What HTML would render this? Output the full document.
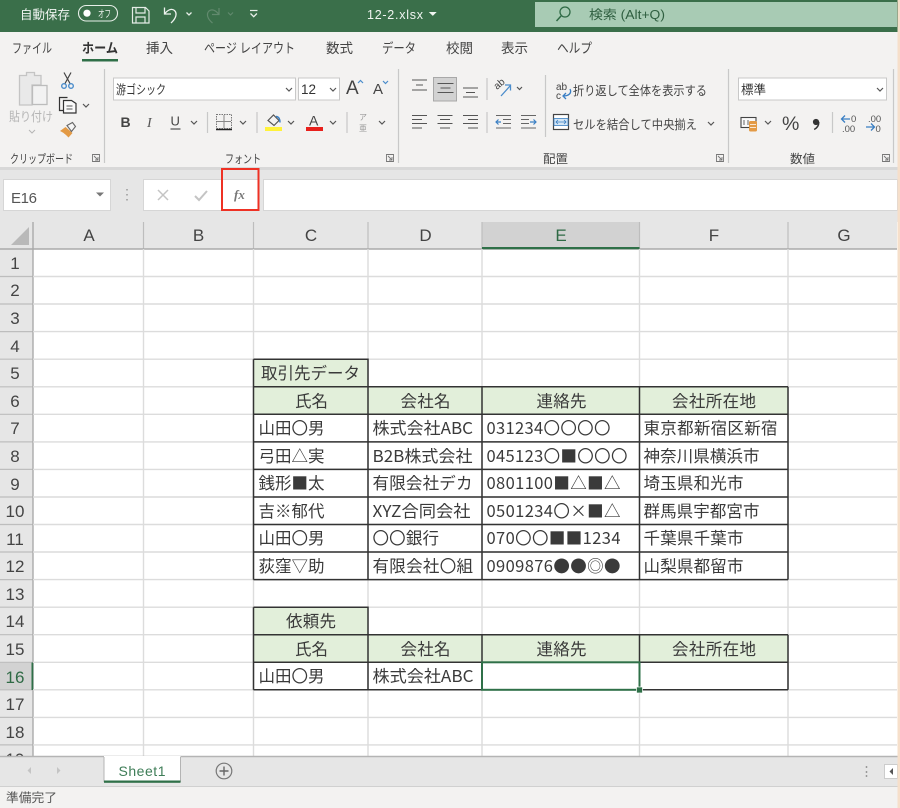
<!DOCTYPE html>
<html lang="ja"><head><meta charset="utf-8"><title>12-2.xlsx</title>
<style>
html,body{margin:0;padding:0;background:#fff;width:900px;height:808px;overflow:hidden}
svg{display:block;filter:blur(.3px)}
text{font-family:"Liberation Sans","Noto Sans CJK JP",sans-serif}
.c{font-size:16.5px;fill:#3a3a3a;font-family:"Noto Sans CJK JP","Liberation Sans",sans-serif}
.h{font-size:17px;fill:#444;text-anchor:middle}
.r{font-size:12.5px;fill:#444}
.t{font-size:13.5px;fill:#444}
.ch{fill:none;stroke:#555;stroke-width:1.2}
.g{stroke:#dcdcdc;stroke-width:1.4}
.b{stroke:#333;stroke-width:1.5;fill:none}
</style></head><body>
<svg width="900" height="808" viewBox="0 0 900 808" xmlns="http://www.w3.org/2000/svg">
<rect width="900" height="808" fill="#fff"/>
<!-- title bar -->
<rect width="900" height="32" fill="#3a6f4a"/>
<rect y="32" width="900" height="136" fill="#f3f2f1"/>
<rect x="535" y="2" width="362" height="25" fill="#a8cbb4"/>
<text x="20" y="19" font-size="12.5" fill="#f0f5f1" textLength="50" lengthAdjust="spacingAndGlyphs">自動保存</text>
<rect x="78.5" y="5.5" width="39" height="15.5" rx="7.7" fill="none" stroke="#e8efe9" stroke-width="1.1"/>
<circle cx="87" cy="13.2" r="3.6" fill="#fff"/>
<text x="98" y="17.5" font-size="10" fill="#f0f5f1" textLength="13" lengthAdjust="spacingAndGlyphs">オフ</text>
<path d="M132.5 7.5h13l3.500 3.500v12h-16.500zM136 7.500v5.500h9v-5.500M136 23v-6h9v6" fill="none" stroke="#e4ece6" stroke-width="1.200"/>
<path d="M164.500 7.500v6.500h6.500M164.500 14c3-4 7-6 10-3.500 3 3 1.500 8-3.500 12.500" fill="none" stroke="#eef3ef" stroke-width="1.300"/>
<path d="M186.500 12.500l2.500 2.500 2.500-2.500" fill="none" stroke="#e8efe9" stroke-width="1.300"/>
<path d="M219 8v6.500h-7M219 14.500c-3-4-7-6-10-3.500-3 3-1.500 8 3.500 12" fill="none" stroke="#628a6e" stroke-width="1.200"/>
<path d="M228 12.500l2.500 2.500 2.500-2.500" fill="none" stroke="#628a6e" stroke-width="1.100"/>
<path d="M250 10.500h7.500" stroke="#e8efe9" stroke-width="1.200"/><path d="M250.500 13.500l3.200 3.200 3.200-3.200" fill="none" stroke="#e8efe9" stroke-width="1.300"/>
<text x="367" y="19" font-size="12.500" fill="#f0f5f1" textLength="56" lengthAdjust="spacing">12-2.xlsx</text>
<path d="M430 12.500h5.500l-2.700 2.700z" fill="#f0f5f1" stroke="#f0f5f1"/>
<circle cx="565" cy="12" r="5" fill="none" stroke="#2f6a45" stroke-width="1.300"/><path d="M561 16l-4.500 5" stroke="#2f6a45" stroke-width="1.500"/>
<text x="589" y="19" font-size="12.500" fill="#2f5f40" textLength="76" lengthAdjust="spacingAndGlyphs">検索 (Alt+Q)</text>
<!-- tabs -->
<text class="t" x="12" y="53" textLength="40" lengthAdjust="spacingAndGlyphs">ファイル</text>
<text class="t" x="82" y="53" textLength="36" lengthAdjust="spacingAndGlyphs" font-weight="700" style="fill:#333">ホーム</text>
<rect x="82" y="59" width="36" height="2.500" fill="#2f6f48"/>
<text class="t" x="146" y="53" textLength="27" lengthAdjust="spacingAndGlyphs">挿入</text>
<text class="t" x="204" y="53" textLength="91" lengthAdjust="spacingAndGlyphs">ページ レイアウト</text>
<text class="t" x="326" y="53" textLength="27" lengthAdjust="spacingAndGlyphs">数式</text>
<text class="t" x="382" y="53" textLength="34" lengthAdjust="spacingAndGlyphs">データ</text>
<text class="t" x="446" y="53" textLength="27" lengthAdjust="spacingAndGlyphs">校閲</text>
<text class="t" x="501" y="53" textLength="27" lengthAdjust="spacingAndGlyphs">表示</text>
<text class="t" x="557" y="53" textLength="35" lengthAdjust="spacingAndGlyphs">ヘルプ</text>
<!-- ribbon separators -->
<g stroke="#c8c8c8" stroke-width="1.200">
<path d="M104.500 69v94M398.500 69v94M728.500 69v94M893.500 69v94M545.500 75v62"/>
<path d="M207.500 112v21M257 112v21M347 112v21M487 78v22M487 112v21M832.500 112v21"/>
</g>
<!-- clipboard -->
<path d="M19.500 75.500h7v-3h8v3h6.500v9.500h-9v20h-12.500z" fill="#e9e9e9" stroke="#c4c4c4" stroke-width="1.300"/>
<rect x="32.500" y="85.500" width="14.500" height="19" fill="#f2f2f2" stroke="#bcbcbc" stroke-width="1.300"/>
<text class="r" x="9" y="121" style="fill:#b5b5b5" textLength="44" lengthAdjust="spacingAndGlyphs">貼り付け</text>
<path d="M29 130l3 3 3-3" fill="none" stroke="#b5b5b5"/>
<path d="M64 72.500l6 11M71 72.500l-6 11" stroke="#444" stroke-width="1.200"/>
<circle cx="64" cy="86" r="2.300" fill="none" stroke="#4a8ccb" stroke-width="1.400"/><circle cx="71" cy="86" r="2.300" fill="none" stroke="#4a8ccb" stroke-width="1.400"/>
<path d="M63 110.500h-3.500v-13h8" fill="none" stroke="#333" stroke-width="1.200"/>
<path d="M63.500 100.500h8l4.500 3v9.500h-12.500z" fill="#fafafa" stroke="#333" stroke-width="1.200"/><path d="M66.500 106h6M66.500 109h6" stroke="#555"/>
<path d="M83 104l3 3 3-3" class="ch"/>
<path d="M60 131l5.500-4 7 6-4 4.500c-3-3-5-5-8.500-6.500z" fill="#e39a45"/>
<path d="M67 125.500l5.500-3 3 4-4 5z" fill="#f5f5f5" stroke="#666" stroke-width="1.100"/>
<text x="10" y="163" font-size="12" fill="#444" textLength="63" lengthAdjust="spacingAndGlyphs">クリップボード</text>
<path d="M92.500 154.500h7v7h-7zM94 156l4 4M98 157v3h-3" fill="none" stroke="#777" stroke-width=".9"/>
<!-- font -->
<rect x="113.500" y="78" width="182" height="22" fill="#fff" stroke="#c8c8c8"/>
<text x="116" y="94" font-size="12.500" fill="#333" textLength="50" lengthAdjust="spacingAndGlyphs">游ゴシック</text>
<path d="M286 88l3 3 3-3" class="ch"/>
<rect x="298.500" y="78" width="41" height="22" fill="#fff" stroke="#c8c8c8"/>
<text x="301" y="94" font-size="13.500" fill="#333">12</text>
<path d="M330 88l3 3 3-3" class="ch"/>
<text x="346" y="94" font-size="19" fill="#444">A</text><path d="M358 83l2.500-2.500 2.500 2.500" fill="none" stroke="#4a8ccb" stroke-width="1.200"/>
<text x="373" y="94" font-size="15" fill="#444">A</text><path d="M383 81l2.500 2.500 2.500-2.500" fill="none" stroke="#4a8ccb" stroke-width="1.200"/>
<text x="120.500" y="127" font-size="14" font-weight="700" fill="#444">B</text>
<text x="147" y="127" font-size="14" font-style="italic" fill="#555" style="font-family:'Liberation Serif',serif">I</text>
<text x="170.500" y="125.500" font-size="13" fill="#444">U</text><path d="M170.500 129h10" stroke="#444" stroke-width="1.100"/>
<path d="M191 121l3 3 3-3" class="ch"/>
<path d="M216.500 114.500h15v14h-15z" fill="none" stroke="#777" stroke-dasharray="1.500 1"/><path d="M216 129.500h16" stroke="#222" stroke-width="1.500"/><path d="M224 115v13M217 121.500h14" stroke="#888"/>
<path d="M240 121l3 3 3-3" class="ch"/>
<path d="M268 120.500l5.500-5.500 5.500 5.500-5 5z" fill="none" stroke="#555" stroke-width="1.200"/><path d="M276 116.500c3 0 4 3 4 6" fill="none" stroke="#3a7fc4" stroke-width="1.500"/>
<rect x="265" y="127" width="17" height="4" fill="#fff23a"/>
<path d="M288 121l3 3 3-3" class="ch"/>
<text x="309" y="125.500" font-size="14" fill="#444">A</text>
<rect x="306" y="127" width="17" height="4" fill="#e8201c"/>
<path d="M330 121l3 3 3-3" class="ch"/>
<text x="359" y="120" font-size="8" fill="#999">ア</text><text x="359" y="131" font-size="8" fill="#999">亜</text>
<path d="M379 121l3 3 3-3" class="ch"/>
<text x="225" y="163" font-size="12" fill="#444" textLength="36" lengthAdjust="spacingAndGlyphs">フォント</text>
<path d="M386.500 154.500h7v7h-7zM388 156l4 4M392 157v3h-3" fill="none" stroke="#777" stroke-width=".9"/>
<!-- alignment -->
<rect x="433.500" y="77.500" width="23" height="23.500" fill="#d2d2d2" stroke="#a8a8a8"/>
<path d="M412 80h15M416 85h7M412 90h15M437.500 83.500h16M440.500 88h10M437.500 92.500h16M463 88h15M466 92.500h9M463 97h15" stroke="#555" stroke-width="1.100"/>
<path d="M412 115.500h15M412 119.500h10M412 123.500h15M412 128h10M437.500 115.500h15M440 119.500h10M437.500 123.500h15M440 128h10M463 115.500h15M468 119.500h10M463 123.500h15M468 128h10" stroke="#555" stroke-width="1.100"/>
<text x="0" y="0" font-size="10" fill="#444" transform="translate(497,90) rotate(-40)">ab</text>
<path d="M501 96l9-10M505 85h5.500v5.500" fill="none" stroke="#4a8ccb" stroke-width="1.300"/>
<path d="M517 87l2.500 2.500 2.500-2.500" class="ch"/>
<path d="M496 115.500h15M503 119.500h8M503 123.500h8M496 128h15M521 115.500h15M521 119.500h8M521 123.500h8M521 128h15" stroke="#666" stroke-width="1.100"/>
<path d="M501 122h-5M498.500 119.500l-2.500 2.500 2.500 2.500" fill="none" stroke="#3a7fc4" stroke-width="1.200"/>
<path d="M530 122h6M533.500 119.500l2.500 2.500-2.500 2.500" fill="none" stroke="#3a7fc4" stroke-width="1.200"/>
<text x="556" y="90" font-size="10" fill="#444">ab</text><text x="556" y="99" font-size="10" fill="#444">c</text>
<path d="M570 89c2 4-1 7-7 7M566 93l-3 3 3 3" fill="none" stroke="#3a7fc4" stroke-width="1.300"/>
<text x="573" y="95" font-size="12.500" fill="#444" textLength="134" lengthAdjust="spacingAndGlyphs">折り返して全体を表示する</text>
<rect x="553.500" y="114.500" width="15" height="15" fill="#fff" stroke="#444" stroke-width="1.200"/><rect x="554" y="118.500" width="14" height="7" fill="#d4e6f5" stroke="#3a7fc4" stroke-width=".8"/><path d="M556 122h10M558 120l-2 2 2 2M564 120l2 2-2 2" fill="none" stroke="#3a7fc4" stroke-width=".8"/>
<text x="573" y="129" font-size="12.500" fill="#444" textLength="124" lengthAdjust="spacingAndGlyphs">セルを結合して中央揃え</text>
<path d="M708 122l3 3 3-3" class="ch"/>
<text x="543" y="163" font-size="12" fill="#444" textLength="25" lengthAdjust="spacingAndGlyphs">配置</text>
<path d="M716.500 154.500h7v7h-7zM718 156l4 4M722 157v3h-3" fill="none" stroke="#777" stroke-width=".9"/>
<!-- number -->
<rect x="738.500" y="78" width="148" height="22" fill="#fff" stroke="#c8c8c8"/>
<text x="741" y="94" font-size="12.500" fill="#333" textLength="25" lengthAdjust="spacingAndGlyphs">標準</text>
<path d="M877 88l3 3 3-3" class="ch"/>
<rect x="741" y="117.500" width="15" height="10" fill="#fafafa" stroke="#444" stroke-width="1.100"/><path d="M744 120v5M748 120v5" stroke="#666"/>
<rect x="749" y="121" width="8" height="10.500" rx="1.500" fill="#e39a45"/><path d="M750 124.500h6M750 127.500h6" stroke="#fff" stroke-width=".8"/>
<path d="M765 121l3 3 3-3" class="ch"/>
<text x="782" y="130" font-size="19.500" fill="#444">%</text>
<circle cx="816" cy="122" r="3.100" fill="#333"/><path d="M818.700 122c.3 3-1.500 6-4.500 7.500" fill="none" stroke="#333" stroke-width="1.500"/>
<path d="M850 119h-8.500M845 115.500l-3.500 3.500 3.500 3.500" fill="none" stroke="#3a7fc4" stroke-width="1.300"/>
<text x="851" y="122" font-size="9.500" fill="#555">0</text><text x="842" y="132" font-size="9.500" fill="#555">.00</text>
<text x="868" y="122" font-size="9.500" fill="#555">.00</text><text x="875.500" y="132" font-size="9.500" fill="#555">0</text>
<path d="M866 127h8.500M871 123.500l3.500 3.500-3.500 3.500" fill="none" stroke="#3a7fc4" stroke-width="1.300"/>
<text x="790" y="163" font-size="12" fill="#444" textLength="25" lengthAdjust="spacingAndGlyphs">数値</text>
<path d="M882.500 154.500h7v7h-7zM884 156l4 4M888 157v3h-3" fill="none" stroke="#777" stroke-width=".9"/>
<!-- formula bar -->
<rect y="167" width="900" height="55" fill="#e6e6e6"/>
<rect y="167" width="900" height="3" fill="#d8d8d8"/>
<rect x="3.500" y="179.500" width="107" height="31" fill="#fff" stroke="#d6d6d6"/>
<text x="11" y="203" font-size="15" fill="#555" textLength="26" lengthAdjust="spacing">E16</text>
<path d="M96 192.500h8l-4 4z" fill="#777"/>
<path d="M127 189v1.500M127 194v1.500M127 199v1.500" stroke="#999" stroke-width="1.500"/>
<rect x="143.500" y="179.500" width="115" height="31" fill="#fff" stroke="#d6d6d6"/>
<rect x="263.500" y="179.500" width="634" height="31" fill="#fff" stroke="#d6d6d6"/>
<path d="M158 190l10 10M168 190l-10 10" stroke="#c4c4c4" stroke-width="1.500"/>
<path d="M195 196l4 4 8-9" fill="none" stroke="#c4c4c4" stroke-width="2"/>
<text x="234" y="199" font-size="13" font-style="italic" font-weight="700" fill="#777" style="font-family:'Liberation Serif',serif">fx</text>
<rect x="222" y="169" width="36.500" height="41" fill="none" stroke="#ee3124" stroke-width="2"/>
<!-- headers -->
<rect y="222" width="33" height="534" fill="#e6e6e6"/>
<rect y="222" width="897" height="27" fill="#e6e6e6"/>
<rect x="482" y="222" width="157.500" height="27" fill="#d2d2d2"/>
<rect x="0" y="662.500" width="33" height="27.500" fill="#d2d2d2"/>
<path d="M11 245l18-18v18z" fill="#b9b9b9"/>
<g stroke="#bdbdbd" stroke-width="1.200">
<path d="M143.500 222v27M253.500 222v27M368 222v27M482 222v27M639.500 222v27M788 222v27"/>
<path d="M0 276.500h33M0 304h33M0 331.600h33M0 359.200h33M0 386.800h33M0 414.300h33M0 441.900h33M0 469.400h33M0 497h33M0 524.500h33M0 552h33M0 579.600h33M0 607.200h33M0 634.700h33M0 662.300h33M0 689.800h33M0 717.400h33M0 744.900h33"/>
</g>
<path d="M0 249h897" stroke="#aaa" stroke-width="1.400"/>
<path d="M33 222v534" stroke="#aaa" stroke-width="1.400"/>
<rect x="482" y="247" width="157.500" height="2.200" fill="#2f7048"/>
<rect x="31.500" y="662.500" width="1.800" height="27.500" fill="#2f7048"/>
<text class="h" x="89" y="241">A</text><text class="h" x="198.500" y="241">B</text><text class="h" x="311" y="241">C</text><text class="h" x="425.500" y="241">D</text><text class="h" x="561" y="241" style="fill:#2f6a45">E</text><text class="h" x="714" y="241">F</text><text class="h" x="844" y="241">G</text>
<text class="h" x="15" y="269">1</text><text class="h" x="15" y="296">2</text><text class="h" x="15" y="324">3</text><text class="h" x="15" y="352">4</text><text class="h" x="15" y="379">5</text><text class="h" x="15" y="407">6</text><text class="h" x="15" y="434">7</text><text class="h" x="15" y="462">8</text><text class="h" x="15" y="490">9</text><text class="h" x="15" y="517">10</text><text class="h" x="15" y="545">11</text><text class="h" x="15" y="572">12</text><text class="h" x="15" y="600">13</text><text class="h" x="15" y="627">14</text><text class="h" x="15" y="655">15</text><text class="h" x="15" y="683" style="fill:#2f6a45">16</text><text class="h" x="15" y="710">17</text><text class="h" x="15" y="738">18</text><text class="h" x="15" y="765">19</text>
<!-- grid -->
<path class="g" d="M33 276.500h864M33 304h864M33 331.600h864M33 359.200h864M33 386.800h864M33 414.300h864M33 441.900h864M33 469.400h864M33 497h864M33 524.500h864M33 552h864M33 579.600h864M33 607.200h864M33 634.700h864M33 662.300h864M33 689.800h864M33 717.400h864M33 744.900h864"/>
<path class="g" d="M143.500 249v507M253.500 249v507M368 249v507M482 249v507M639.500 249v507M788 249v507"/>
<!-- fills -->
<g fill="#e2efda">
<rect x="253.500" y="359.200" width="114.500" height="27.600"/>
<rect x="253.500" y="386.800" width="534.500" height="27.500"/>
<rect x="253.500" y="607.200" width="114.500" height="27.500"/>
<rect x="253.500" y="634.700" width="534.500" height="27.600"/>
</g>
<!-- borders -->
<path class="b" d="M253.500 359.200h114.500v27.600M253.500 359.200v220.400M253.500 386.800h534.500M253.500 414.300h534.500M253.500 441.900h534.500M253.500 469.400h534.500M253.500 497h534.500M253.500 524.500h534.500M253.500 552h534.500M253.500 579.600h534.500M368 386.800v192.800M482 386.800v192.800M639.500 386.800v192.800M788 386.800v192.800"/>
<path class="b" d="M253.500 607.200h114.500v27.500M253.500 607.200v82.600M253.500 634.700h534.500M253.500 662.300h534.500M253.500 689.800h534.500M368 634.700v55.100M482 634.700v55.100M639.500 634.700v55.100M788 634.700v55.100"/>
<rect x="482" y="662.300" width="157.500" height="27.500" fill="#fff" stroke="#2f7048" stroke-width="2"/>
<rect x="636.500" y="687" width="6" height="6" fill="#2f7048" stroke="#fff" stroke-width=".7"/>
<!-- table text -->
<text class="c" x="261" y="379" textLength="99" lengthAdjust="spacing">取引先データ</text>
<text class="c" x="295" y="407" textLength="33" lengthAdjust="spacing">氏名</text>
<text class="c" x="400.500" y="407" textLength="50" lengthAdjust="spacing">会社名</text>
<text class="c" x="536.500" y="407" textLength="50" lengthAdjust="spacing">連絡先</text>
<text class="c" x="672" y="407" textLength="84" lengthAdjust="spacing">会社所在地</text>

<text class="c" x="258.500" y="434" textLength="66" lengthAdjust="spacing">山田〇男</text>
<text class="c" x="372.500" y="434" textLength="100.500" lengthAdjust="spacingAndGlyphs">株式会社ABC</text>
<text class="c" x="486.500" y="434" textLength="124" lengthAdjust="spacing">031234〇〇〇〇</text>
<text class="c" x="643.500" y="434" textLength="134" lengthAdjust="spacing">東京都新宿区新宿</text>

<text class="c" x="258.500" y="462" textLength="66" lengthAdjust="spacing">弓田△実</text>
<text class="c" x="372.500" y="462" textLength="100" lengthAdjust="spacingAndGlyphs">B2B株式会社</text>
<text class="c" x="486.500" y="462" textLength="141" lengthAdjust="spacing">045123〇■〇〇〇</text>
<text class="c" x="643.500" y="462" textLength="116" lengthAdjust="spacing">神奈川県横浜市</text>

<text class="c" x="258.500" y="489" textLength="66" lengthAdjust="spacing">銭形■太</text>
<text class="c" x="372.500" y="489" textLength="100" lengthAdjust="spacing">有限会社デカ</text>
<text class="c" x="486.500" y="489" textLength="134" lengthAdjust="spacing">0801100■△■△</text>
<text class="c" x="643.500" y="489" textLength="100" lengthAdjust="spacing">埼玉県和光市</text>

<text class="c" x="258.500" y="517" textLength="66" lengthAdjust="spacing">吉※郁代</text>
<text class="c" x="372.500" y="517" textLength="98" lengthAdjust="spacingAndGlyphs">XYZ合同会社</text>
<text class="c" x="486.500" y="517" textLength="134" lengthAdjust="spacing">0501234〇×■△</text>
<text class="c" x="643.500" y="517" textLength="116" lengthAdjust="spacing">群馬県宇都宮市</text>

<text class="c" x="258.500" y="544" textLength="66" lengthAdjust="spacing">山田〇男</text>
<text class="c" x="372.500" y="544" textLength="66.500" lengthAdjust="spacing">〇〇銀行</text>
<text class="c" x="486.500" y="544" textLength="134" lengthAdjust="spacing">070〇〇■■1234</text>
<text class="c" x="643.500" y="544" textLength="100" lengthAdjust="spacing">千葉県千葉市</text>

<text class="c" x="258.500" y="572" textLength="66" lengthAdjust="spacing">荻窪▽助</text>
<text class="c" x="372.500" y="572" textLength="100.500" lengthAdjust="spacing">有限会社〇組</text>
<text class="c" x="486.500" y="572" textLength="134" lengthAdjust="spacing">0909876●●◎●</text>
<text class="c" x="643.500" y="572" textLength="100" lengthAdjust="spacing">山梨県都留市</text>

<text class="c" x="286" y="627" textLength="50" lengthAdjust="spacing">依頼先</text>
<text class="c" x="295" y="655" textLength="33" lengthAdjust="spacing">氏名</text>
<text class="c" x="400.500" y="655" textLength="50" lengthAdjust="spacing">会社名</text>
<text class="c" x="536.500" y="655" textLength="50" lengthAdjust="spacing">連絡先</text>
<text class="c" x="672" y="655" textLength="84" lengthAdjust="spacing">会社所在地</text>
<text class="c" x="258.500" y="682" textLength="66" lengthAdjust="spacing">山田〇男</text>
<text class="c" x="372.500" y="682" textLength="101" lengthAdjust="spacingAndGlyphs">株式会社ABC</text>
<!-- sheet tabs -->
<rect y="756" width="900" height="31" fill="#e6e6e6"/>
<path d="M0 756.500h900" stroke="#b4b4b4" stroke-width="1.500"/>
<path d="M31 767v7l-3.500-3.500zM57 767v7l3.500-3.500z" fill="#c4c4c4"/>
<rect x="104" y="756" width="76.500" height="26" fill="#fff"/>
<path d="M104 757v25M180.500 757v25" stroke="#b4b4b4"/>
<rect x="104" y="780.500" width="76.500" height="2.300" fill="#2f7048"/>
<text x="118.500" y="776" font-size="14" fill="#3e7d57" textLength="47" lengthAdjust="spacing">Sheet1</text>
<circle cx="224" cy="771" r="7.800" fill="none" stroke="#777" stroke-width="1.200"/><path d="M219.500 771h9M224 766.500v9" stroke="#666" stroke-width="1.400"/>
<path d="M866.500 766v2M866.500 771v2M866.500 775v2" stroke="#999" stroke-width="1.500"/>
<rect x="884.500" y="764.500" width="13" height="14" fill="#fff" stroke="#ccc"/><path d="M893 768v7l-3.500-3.500z" fill="#555"/>
<!-- status -->
<rect y="787" width="900" height="21" fill="#f3f2f1"/>
<path d="M0 786.500h900" stroke="#d0d0d0"/>
<text x="6" y="802" font-size="12.500" fill="#555" textLength="51" lengthAdjust="spacingAndGlyphs">準備完了</text>
<!-- right edge -->
<rect x="897.500" y="0" width="2.500" height="808" fill="#f6dfca"/>
</svg>
</body></html>
